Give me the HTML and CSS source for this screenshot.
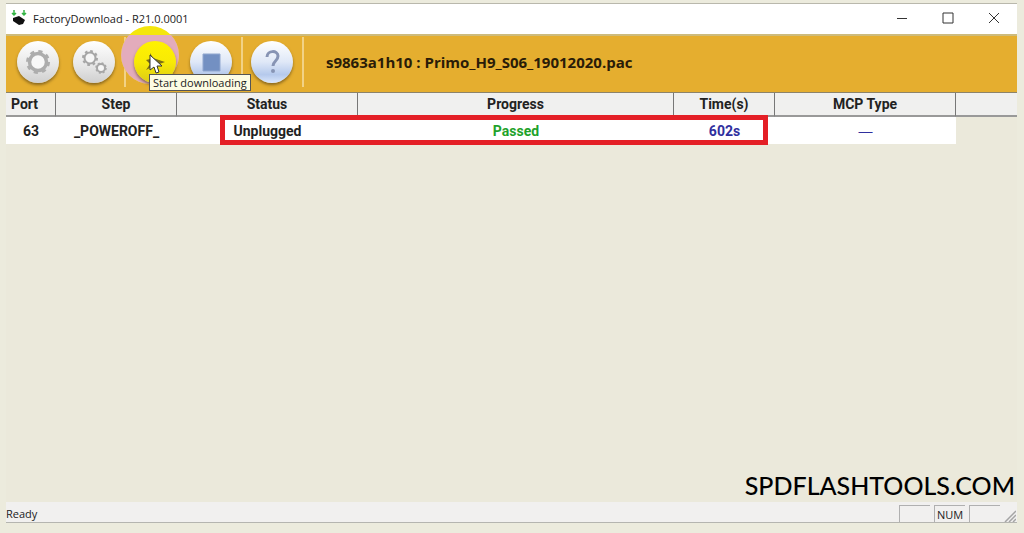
FILE: index.html
```html
<!DOCTYPE html>
<html lang="en">
<head>
    <meta charset="UTF-8">
    <meta name="viewport" content="width=device-width, initial-scale=1.0">
    <title>FactoryDownload</title>
    <link rel="stylesheet" href="styles.css">
</head>
<body>
    <div class="window">
        <!-- Title bar -->
        <header class="titlebar">
            <svg class="app-icon" width="16" height="16" viewBox="0 0 16 16">
                <path d="M2 8l6-2 6 4-2 4-4 1-6-4z" fill="#111"/>
                <path d="M3 0v5M1 3l2 2 2-2M13 0v5M11 3l2 2 2-2" fill="none" stroke="#35b545" stroke-width="1.500"/>
            </svg>
            <h1>FactoryDownload - R21.0.0001</h1>
            <div class="window-buttons">
                <button aria-label="Minimize"><svg width="12" height="12" viewBox="0 0 12 12"><path d="M1 6.500h10"/></svg></button>
                <button aria-label="Maximize"><svg width="12" height="12" viewBox="0 0 12 12"><path d="M1 1h10v10H1z"/></svg></button>
                <button aria-label="Close"><svg width="12" height="12" viewBox="0 0 12 12"><path d="M1 1l10 10M11 1L1 11"/></svg></button>
            </div>
        </header>

        <!-- Toolbar -->
        <div class="toolbar">
            <div class="group">
                <button class="tool gray" aria-label="Load packet">
                    <svg width="28" height="28" viewBox="0 0 28 28">
                        <circle cx="14" cy="14" r="8.500" fill="#f8f8f8" stroke="#adadad" stroke-width="3.500"/>
                        <circle cx="14" cy="14" r="10.500" fill="none" stroke="#adadad" stroke-width="3" stroke-dasharray="4.100 4.147"/>
                    </svg>
                </button>
                <button class="tool gray" aria-label="Settings">
                    <svg width="28" height="28" viewBox="0 0 28 28">
                        <circle cx="10" cy="10" r="5.500" fill="#f6f6f6" stroke="#a6a6a6" stroke-width="2"/>
                        <circle cx="10" cy="10" r="7" fill="none" stroke="#a6a6a6" stroke-width="2" stroke-dasharray="2.700 2.798"/>
                        <circle cx="21" cy="20" r="4" fill="#f6f6f6" stroke="#a6a6a6" stroke-width="2"/>
                        <circle cx="21" cy="20" r="5" fill="none" stroke="#a6a6a6" stroke-width="1.500" stroke-dasharray="2 1.927"/>
                    </svg>
                </button>
            </div>
            <div class="group">
                <div class="start">
                    <svg class="halo" width="60" height="62" viewBox="0 0 60 62">
                        <defs>
                            <clipPath id="over-toolbar"><path d="M0 11h60v51H0z"/></clipPath>
                        </defs>
                        <circle cx="30" cy="31" r="29" fill="#f4e60c"/>
                        <circle cx="30" cy="31" r="29" fill="#e3acbc" clip-path="url(#over-toolbar)"/>
                        <path d="M30 60a29 29 0 0 0 23-11L38 48z" fill="#efd51c"/>
                    </svg>
                    <button class="tool yellow" aria-label="Start downloading" aria-describedby="start-tip">
                        <svg width="28" height="28" viewBox="0 0 28 28"><path d="M9 5l3 5 12 4-11 4-8 4 4-6-4-4 4-1z" fill="#7d6f14"/></svg>
                    </button>
                    <span class="tooltip" id="start-tip" role="tooltip">Start downloading</span>
                    <svg class="cursor" width="14" height="20" viewBox="0 0 14 20">
                        <path d="M1 1v15l4-3 2 6 3-1-2-6h5z" fill="#fff" stroke="#333"/>
                    </svg>
                </div>
                <button class="tool blue" aria-label="Stop">
                    <svg width="28" height="28" viewBox="0 0 28 28"><path d="M6 6h17v17H6z" fill="#7390c2" stroke="#91a7cf"/></svg>
                </button>
            </div>
            <div class="group">
                <button class="tool blue" aria-label="About">
                    <svg width="28" height="28" viewBox="0 0 28 28">
                        <path d="M9 9c0-7 11-7 11-1 0 5-5 5-5 10" fill="none" stroke="#8794b4" stroke-width="3"/>
                        <circle cx="15" cy="23" r="2" fill="#8794b4"/>
                    </svg>
                </button>
            </div>
            <p class="packet">s9863a1h10 : Primo_H9_S06_19012020.pac</p>
        </div>

        <!-- Port list -->
        <main class="ports">
            <table>
                <colgroup>
                    <col class="col-port">
                    <col class="col-step">
                    <col class="col-status">
                    <col class="col-progress">
                    <col class="col-time">
                    <col class="col-mcp">
                    <col class="col-rest">
                </colgroup>
                <thead>
                    <tr>
                        <th class="port">Port</th>
                        <th>Step</th>
                        <th>Status</th>
                        <th>Progress</th>
                        <th>Time(s)</th>
                        <th>MCP Type</th>
                        <th></th>
                    </tr>
                </thead>
                <tbody>
                    <tr>
                        <td>63</td>
                        <td>_POWEROFF_</td>
                        <td>Unplugged</td>
                        <td class="passed">Passed</td>
                        <td class="value">602s</td>
                        <td class="value mcp">—</td>
                        <td class="empty"></td>
                    </tr>
                </tbody>
            </table>
            <div class="marker"></div>
            <div class="watermark">SPDFLASHTOOLS.COM</div>
        </main>

        <!-- Status bar -->
        <footer class="statusbar">
            <span class="ready">Ready</span>
            <span class="pane"></span>
            <span class="pane">NUM</span>
            <span class="pane"></span>
            <svg class="grip" width="12" height="12" viewBox="0 0 12 12"><path d="M1 12L12 1M5 12l7-7M9 12l3-3" stroke="#a5a5a5" stroke-width="1.500"/></svg>
        </footer>
    </div>
</body>
</html>
```

FILE: styles.css
```css
* {
    box-sizing: border-box;
}

body {
    margin: 0;
    height: 100vh;
    padding: 3px 7px 10px 6px;
    background-color: #ecebdd;
    font-family: "Open Sans", "Noto Sans", sans-serif;
    font-size: 11px;
    color: #222;
}

h1, p {
    margin: 0;
}

button {
    border: none;
    padding: 0;
    background: none;
}

.window {
    height: 100%;
    display: flex;
    flex-direction: column;
    border-top: 1px solid #b9b8ac;
    border-bottom: 1px solid #b5b5b0;
}

/* Title bar */
.titlebar {
    height: 30px;
    flex: none;
    display: flex;
    align-items: center;
    padding: 0 0 2px 5px;
    background-color: #fff;
}

.titlebar h1 {
    flex: 1;
    margin-left: 6px;
    font-size: 11px;
    font-weight: normal;
}

.window-buttons {
    display: flex;
}

.window-buttons button {
    width: 46px;
    height: 28px;
}

.window-buttons svg {
    display: block;
    margin: auto;
    fill: none;
    stroke: #333;
}

/* Toolbar */
.toolbar {
    height: 59px;
    flex: none;
    display: flex;
    align-items: center;
    padding-bottom: 4px;
    background-color: #e5ae2f;
    border-top: 2px solid #cdbb7c;
    border-bottom: 1px solid #8c836a;
}

.group {
    height: 50px;
    display: flex;
    align-items: center;
    gap: 14px;
    padding: 0 9px 0 8px;
    border-right: 2px solid #f2d285;
}

.group:first-child {
    padding-left: 11px;
}

.tool {
    position: relative;
    display: flex;
    align-items: center;
    justify-content: center;
    width: 42px;
    height: 42px;
    border-radius: 50%;
    box-shadow: 0 2px 3px rgba(80, 60, 20, 0.6);
}

.gray {
    background: linear-gradient(#fff, #e6e6e6 60%, #cfcfcf);
}

.blue {
    background: linear-gradient(#fff, #dfe8f7 50%, #b5c9ec 80%, #dbe7fb);
}

.yellow {
    background: linear-gradient(#fff200, #f8ea05 50%, #dccb16);
}

.start {
    position: relative;
}

.halo {
    position: absolute;
    left: -14px;
    top: -17px;
}

.tooltip {
    position: absolute;
    left: 15px;
    top: 33px;
    z-index: 2;
    padding: 0 3px;
    border: 1px solid #555;
    background-color: #fdfce3;
    line-height: 15px;
    white-space: nowrap;
}

.cursor {
    position: absolute;
    left: 15px;
    top: 13px;
    z-index: 3;
}

.packet {
    margin-left: 22px;
    font-size: 15px;
    font-weight: bold;
    color: #2a1c08;
}

/* Port list */
.ports {
    position: relative;
    flex: 1;
    background-color: #ebe9db;
}

table {
    width: 100%;
    table-layout: fixed;
    border-collapse: separate;
    border-spacing: 0;
    font-family: Roboto, "Liberation Sans", sans-serif;
    font-size: 14px;
    font-weight: bold;
    text-align: center;
}

.col-port { width: 50px; }
.col-step { width: 121px; }
.col-status { width: 181px; }
.col-progress { width: auto; }
.col-time { width: 101px; }
.col-mcp { width: 181px; }
.col-rest { width: 61px; }

th {
    height: 24px;
    padding: 0;
    background-color: #f0f0ef;
    border-right: 1px solid #777;
    border-bottom: 2px solid #999;
}

th:last-child {
    border-right: none;
}

th.port {
    padding-right: 12px;
}

td {
    height: 27px;
    padding: 0;
    background-color: #fff;
}

td.passed {
    color: #1fa22b;
}

td.value {
    color: #2f2f9e;
}

td.mcp {
    font-family: "Liberation Sans", sans-serif;
    font-weight: normal;
}

td.empty {
    background: none;
}

/* Frame drawn over status, progress and time */
.marker {
    position: absolute;
    left: 214px;
    right: 249px;
    top: 22px;
    height: 30px;
    border: 5px solid #e41f26;
}

.watermark {
    position: absolute;
    right: 2px;
    bottom: 0;
    font-family: Lato, sans-serif;
    font-size: 25px;
    font-weight: 500;
    line-height: 33px;
    color: #000;
}

/* Status bar */
.statusbar {
    height: 20px;
    flex: none;
    display: flex;
    align-items: flex-end;
    gap: 4px;
    padding-right: 1px;
    background-color: #f1f0ef;
}

.ready {
    flex: 1;
    line-height: 17px;
}

.pane {
    width: 31px;
    height: 17px;
    border-top: 1px solid #b0b0b0;
    border-left: 1px solid #b0b0b0;
    line-height: 17px;
    text-align: center;
}
```
